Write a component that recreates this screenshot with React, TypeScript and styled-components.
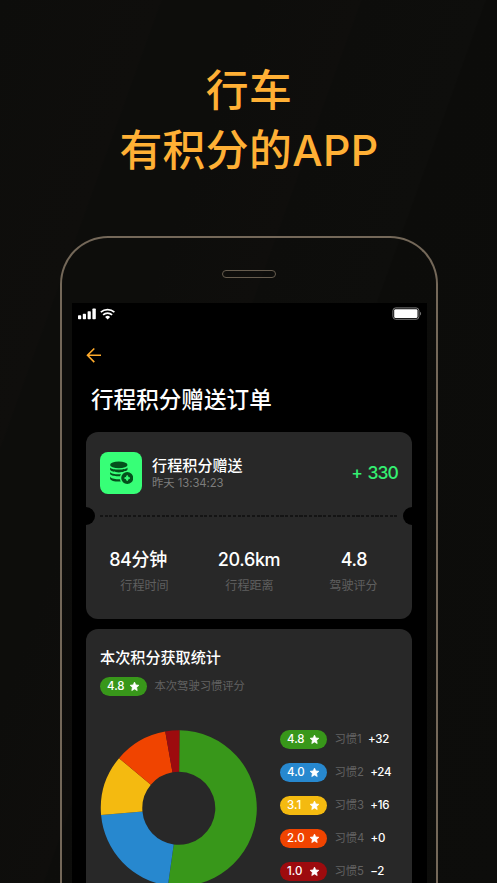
import React from "react";
import styled, { createGlobalStyle } from "styled-components";

const Global = createGlobalStyle`
  * { box-sizing: border-box; }
  html, body { margin: 0; padding: 0; background: #0d0d0b; overflow: hidden; }
  body { font-family: Inter, "Noto Sans CJK SC", sans-serif; color: #fff; }
  svg { display: block; }
`;

const Page = styled.main`
  width: 497px;
  height: 883px;
  overflow: hidden;
  display: flex;
  flex-direction: column;
  align-items: center;
  background: linear-gradient(
    109.8deg,
    #0d0d0b 0px, #0f0e0c 151px, #0d0d0b 153px, #0d0d0b 240px,
    #0f0e0c 339px, #0d0d0b 341px, #0e0e0c 456px, #0c0c0a 458px, #0d0d0b 767px
  );
`;

const Headline = styled.h1`
  margin: 0;
  height: 236px;
  padding: 61px 0 0 1px;
  flex: none;
  text-align: center;
  font-size: 42.8px;
  font-weight: 500;
  line-height: 60px;
  letter-spacing: 0.4px;
  color: #ffb035;
`;

const Phone = styled.section`
  width: 378px;
  height: 760px;
  flex: none;
  margin-left: 1px;
  border: 2px solid #746859;
  border-bottom: 0;
  border-radius: 48px 48px 0 0;
  display: flex;
  flex-direction: column;
  align-items: center;
`;

const Speaker = styled.div`
  width: 54px;
  height: 8px;
  margin: 32px 0 25px;
  flex: none;
  border: 1px solid #665c4e;
  border-radius: 4px;
`;

const Screen = styled.div`
  width: 355px;
  flex: 1;
  background: #000;
  padding: 0 15px 0 14px;
  display: flex;
  flex-direction: column;
`;

const StatusBar = styled.div`
  height: 21px;
  margin: 0 -10px 0 -8px;
  display: flex;
  align-items: center;
  gap: 4px;
  & > :last-child { margin-left: auto; }
`;

const BackButton = styled.button`
  width: 16px;
  height: 16px;
  margin-top: 23px;
  padding: 0;
  border: 0;
  background: none;
`;

const Title = styled.h2`
  margin: 21px 0 16px 5.5px;
  height: 32px;
  line-height: 32px;
  font-size: 22.6px;
  font-weight: 500;
`;

const Card = styled.article<{ $height: number }>`
  height: ${(p) => p.$height}px;
  flex: none;
  margin-bottom: 10px;
  padding: 0 14px;
  border-radius: 12px;
  background: #282828;
`;

const OrderRow = styled.div`
  height: 83px;
  padding-top: 20px;
  display: flex;
  align-items: flex-start;
`;

const CoinTile = styled.div`
  width: 42px;
  height: 42px;
  border-radius: 8px;
  background: #37ff77;
  display: grid;
  place-items: center;
`;

const OrderText = styled.div`
  margin-left: 10.6px;
  padding-top: 4px;
  flex: 1;
`;

const OrderName = styled.div`
  height: 19px;
  line-height: 20px;
  font-size: 15.1px;
  font-weight: 500;
`;

const OrderTime = styled.div`
  height: 16px;
  line-height: 16px;
  font-size: 11.3px;
  letter-spacing: -0.05px;
  color: #7d7d7d;
`;

const Points = styled.div`
  line-height: 42px;
  font-size: 17.5px;
  font-weight: 500;
  letter-spacing: -0.9px;
  word-spacing: 1.6px;
  margin-right: -0.5px;
  color: #34f072;
`;

const Tear = styled.div`
  height: 1px;
  margin: 0 -14px;
  display: flex;
  align-items: center;
  justify-content: space-between;
`;

const Notch = styled.span<{ $side: "left" | "right" }>`
  width: 9px;
  height: 18px;
  background: #000;
  border-radius: ${(p) => (p.$side === "left" ? "0 9px 9px 0" : "9px 0 0 9px")};
`;

const Dashes = styled.span`
  width: 297px;
  height: 2px;
  background: repeating-linear-gradient(90deg, #141414 0 3px, transparent 3px 4.75px);
`;

const StatGrid = styled.div<{ $columns: string; $top: number }>`
  display: grid;
  grid-template-columns: ${(p) => p.$columns};
  margin: ${(p) => p.$top}px -14px 0;
  text-align: center;
`;

const StatValue = styled.div`
  height: 26px;
  line-height: 26px;
  font-size: 18px;
  font-weight: 500;
  letter-spacing: -0.35px;
`;

const StatLabel = styled.div`
  height: 18px;
  line-height: 18px;
  font-size: 12.1px;
  color: #5f5f5f;
`;

const SectionTitle = styled.h3`
  margin: 0;
  padding: 17px 0 0 0.6px;
  height: 48px;
  line-height: 24px;
  font-size: 15.1px;
  font-weight: 500;
`;

const ScoreRow = styled.div`
  display: flex;
  align-items: center;
  height: 19px;
  gap: 8px;
`;

const Pill = styled.span<{ $color: string }>`
  width: 47px;
  height: 19px;
  padding: 0 6.5px 0 7.5px;
  flex: none;
  display: flex;
  align-items: center;
  justify-content: space-between;
  border-radius: 10px;
  background: ${(p) => p.$color};
  font-size: 11.5px;
  font-weight: 500;
  line-height: 19px;
`;

const Muted = styled.span`
  font-size: 11.3px;
  line-height: 19px;
  color: #626262;
`;

const Gain = styled.span`
  margin-left: -1.8px;
  font-size: 11.5px;
  letter-spacing: -0.25px;
  line-height: 19px;
  font-weight: 500;
`;

const ChartRow = styled.div`
  margin-top: 34px;
  display: flex;
  align-items: flex-start;
`;

const Legend = styled.div`
  margin-left: 23px;
  display: flex;
  flex-direction: column;
  gap: 14.1px;
`;

const habits = [
  { score: "4.8", name: "习惯1", gain: "+32", color: "#38971a", end: 188 },
  { score: "4.0", name: "习惯2", gain: "+24", color: "#2788cf", end: 265 },
  { score: "3.1", name: "习惯3", gain: "+16", color: "#f4ba10", end: 310 },
  { score: "2.0", name: "习惯4", gain: "+0", color: "#f04400", end: 350 },
  { score: "1.0", name: "习惯5", gain: "−2", color: "#9d0b0e", end: 360.5 },
];

const point = (r: number, deg: number) => {
  const a = (deg * Math.PI) / 180;
  return `${78.8 + r * Math.sin(a)} ${78.3 - r * Math.cos(a)}`;
};

const slice = (from: number, to: number) => {
  const large = to - from > 180 ? 1 : 0;
  return `M${point(78, from)} A78 78 0 ${large} 1 ${point(78, to)} L${point(36.5, to)} A36.5 36.5 0 ${large} 0 ${point(36.5, from)}Z`;
};

const Donut = () => (
  <svg width="157" height="157" viewBox="0 0 157 157">
    {habits.map((h, i) => (
      <path key={h.name} d={slice(i ? habits[i - 1].end : 0.5, h.end)} fill={h.color} />
    ))}
  </svg>
);

const Star = () => (
  <svg width="11" height="11" viewBox="0 0 24 24" fill="#fff" stroke="#fff" strokeWidth="1.6" strokeLinejoin="round">
    <path d="M12 2.4l2.9 6.2 6.7.8-5 4.7 1.3 6.7-5.9-3.3-5.9 3.3 1.3-6.7-5-4.7 6.7-.8z" />
  </svg>
);

const Signal = () => (
  <svg width="18" height="12" viewBox="0 0 18 12" fill="#fff">
    <rect x="0" y="7.3" width="3.2" height="4" rx="0.7" />
    <rect x="4.8" y="5.7" width="3.2" height="5.6" rx="0.7" />
    <rect x="9.6" y="3.3" width="3.2" height="8" rx="0.7" />
    <rect x="14.4" y="0.5" width="3.4" height="10.8" rx="0.7" />
  </svg>
);

const Wifi = () => (
  <svg width="16" height="12" viewBox="0 0 16 12" fill="none" stroke="#fff" strokeWidth="1.7">
    <path d="M0.8 4.1a10.4 10.4 0 0 1 13.6 0" />
    <path d="M3.1 6.8a6.6 6.6 0 0 1 9 0" />
    <path d="M5.1 9a3.6 3.6 0 0 1 5 0l-2.5 2.6z" fill="#fff" stroke="none" />
  </svg>
);

const Battery = () => (
  <svg width="30" height="13" viewBox="0 0 30 13">
    <rect x="0.9" y="0.9" width="26" height="11.4" rx="2.8" fill="none" stroke="#7b7b7b" />
    <rect x="2.2" y="2.2" width="23.3" height="8.9" rx="1.4" fill="#fff" />
    <path d="M28.2 4.7c1.2.5 1.2 3.3 0 3.8z" fill="#8a8a8a" />
  </svg>
);

const Arrow = () => (
  <svg width="16" height="16" viewBox="0 0 16 16" fill="none" stroke="#ffab2c" strokeWidth="1.6">
    <path d="M15 8.3H1.8M8.3 1.5L1.5 8.3l6.8 6.8" />
  </svg>
);

const Coins = () => (
  <svg width="24" height="24" viewBox="0 0 24 24">
    <g fill="#04501c">
      <ellipse cx="9.8" cy="3.9" rx="8.7" ry="3.3" />
      <path d="M1.1 6.4c1.6 2.9 15.8 2.9 17.4 0v2.2c-1 3.7-16.4 3.7-17.4 0z" />
      <path d="M1.1 10.9c1.2 2.9 14.5 3.2 17.4.3v1.6c-3 3.5-16.2 3.2-17.4.3z" />
      <path d="M1.1 15.5c1 2.6 7 3.1 12 2.4v2.4c-5 .6-11.2 0-12-2.6z" />
    </g>
    <circle cx="18.2" cy="17.1" r="6.7" fill="#04501c" stroke="#37ff77" strokeWidth="1.4" />
    <path d="M18.2 14.4l.9 1.8 1.8.9-1.8.9-.9 1.8-.9-1.8-1.8-.9 1.8-.9z" fill="#37ff77" stroke="#37ff77" strokeWidth="0.9" />
  </svg>
);

export default function App() {
  return (
    <>
      <Global />
      <Page>
        <Headline>
          行车
          <br />
          有积分的APP
        </Headline>
        <Phone>
          <Speaker />
          <Screen>
            <StatusBar>
              <Signal />
              <Wifi />
              <Battery />
            </StatusBar>
            <BackButton aria-label="返回">
              <Arrow />
            </BackButton>
            <Title>行程积分赠送订单</Title>
            <Card $height={187}>
              <OrderRow>
                <CoinTile>
                  <Coins />
                </CoinTile>
                <OrderText>
                  <OrderName>行程积分赠送</OrderName>
                  <OrderTime>昨天 13:34:23</OrderTime>
                </OrderText>
                <Points>+ 330</Points>
              </OrderRow>
              <Tear>
                <Notch $side="left" />
                <Dashes />
                <Notch $side="right" />
              </Tear>
              <StatGrid $columns="105px 117px 93px" $top={31}>
                <StatValue>84分钟</StatValue>
                <StatValue>20.6km</StatValue>
                <StatValue>4.8</StatValue>
              </StatGrid>
              <StatGrid $columns="118px 92px 116px" $top={4}>
                <StatLabel>行程时间</StatLabel>
                <StatLabel>行程距离</StatLabel>
                <StatLabel>驾驶评分</StatLabel>
              </StatGrid>
            </Card>
            <Card $height={300}>
              <SectionTitle>本次积分获取统计</SectionTitle>
              <ScoreRow>
                <Pill $color="#38971a">
                  4.8 <Star />
                </Pill>
                <Muted>本次驾驶习惯评分</Muted>
              </ScoreRow>
              <ChartRow>
                <Donut />
                <Legend>
                  {habits.map((h) => (
                    <ScoreRow key={h.name}>
                      <Pill $color={h.color}>
                        {h.score} <Star />
                      </Pill>
                      <Muted>{h.name}</Muted>
                      <Gain>{h.gain}</Gain>
                    </ScoreRow>
                  ))}
                </Legend>
              </ChartRow>
            </Card>
          </Screen>
        </Phone>
      </Page>
    </>
  );
}
